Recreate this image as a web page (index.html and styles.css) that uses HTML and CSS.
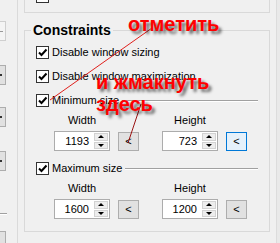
FILE: index.html
```html
<!DOCTYPE html>
<html lang="ru">
<head>
    <meta charset="UTF-8" />
    <meta name="viewport" content="width=device-width, initial-scale=1.0" />
    <title>Constraints</title>
    <link rel="stylesheet" href="styles.css">
</head>
<body>
    <div class="window">
        <div class="side">
            <div class="side-btn side-btn-first"><span class="dot"></span></div>
            <div class="side-btn side-btn-2"><span class="dot"></span></div>
            <div class="side-btn side-btn-3"><span class="dot"></span></div>
            <div class="side-btn side-btn-4"><span class="dot"></span></div>
            <div class="side-sep"></div>
            <div class="side-btn side-btn-5"></div>
        </div>

        <div class="main">
            <div class="group-stub">
                <div class="stub-check"></div>
            </div>

            <fieldset class="group">
                <legend>Constraints</legend>

                <label class="check-row">
                    <span class="check"><svg viewBox="0 0 11 11"><path d="M2 5.5 L4.5 8 L9.5 2.5"/></svg></span>
                    <span>Disable window sizing</span>
                </label>
                <label class="check-row">
                    <span class="check"><svg viewBox="0 0 11 11"><path d="M2 5.5 L4.5 8 L9.5 2.5"/></svg></span>
                    <span>Disable window maximization</span>
                </label>

                <div class="size-block">
                    <div class="check-row">
                        <span class="check"><svg viewBox="0 0 11 11"><path d="M2 5.5 L4.5 8 L9.5 2.5"/></svg></span>
                        <span>Minimum size</span>
                        <span class="rule"></span>
                    </div>
                    <div class="size-cols">
                        <div class="size-col">
                            <div class="size-label">Width</div>
                            <div class="size-row">
                                <div class="spin"><span class="spin-value">1193</span><span class="arrows"><span class="arrow up"></span><span class="arrow down"></span></span></div>
                                <button class="pick">&lt;</button>
                            </div>
                        </div>
                        <div class="size-col">
                            <div class="size-label">Height</div>
                            <div class="size-row">
                                <div class="spin"><span class="spin-value">723</span><span class="arrows"><span class="arrow up"></span><span class="arrow down"></span></span></div>
                                <button class="pick pick-focus">&lt;</button>
                            </div>
                        </div>
                    </div>
                </div>

                <div class="size-block size-block-max">
                    <div class="check-row">
                        <span class="check"><svg viewBox="0 0 11 11"><path d="M2 5.5 L4.5 8 L9.5 2.5"/></svg></span>
                        <span>Maximum size</span>
                        <span class="rule"></span>
                    </div>
                    <div class="size-cols">
                        <div class="size-col">
                            <div class="size-label">Width</div>
                            <div class="size-row">
                                <div class="spin"><span class="spin-value">1600</span><span class="arrows"><span class="arrow up"></span><span class="arrow down"></span></span></div>
                                <button class="pick">&lt;</button>
                            </div>
                        </div>
                        <div class="size-col">
                            <div class="size-label">Height</div>
                            <div class="size-row">
                                <div class="spin"><span class="spin-value">1200</span><span class="arrows"><span class="arrow up"></span><span class="arrow down"></span></span></div>
                                <button class="pick">&lt;</button>
                            </div>
                        </div>
                    </div>
                </div>
            </fieldset>
        </div>

        <div class="strip"></div>
    </div>

    <!-- пометки поверх скриншота -->
    <svg class="arrows-layer" width="280" height="243" viewBox="0 0 280 243">
        <line x1="152" y1="28" x2="50" y2="100" class="line-red"/>
        <line x1="141" y1="104" x2="128" y2="143" class="line-dark"/>
    </svg>
    <div class="note note-top">отметить</div>
    <div class="note note-mid">и жмакнуть<br>здесь</div>
</body>
</html>
```

FILE: styles.css
```css
* {
    margin: 0;
    padding: 0;
    box-sizing: border-box;
}

body {
    width: 280px;
    height: 243px;
    overflow: hidden;
    position: relative;
    background-color: #f0f0f0;
    font-family: 'Liberation Sans', Arial, sans-serif;
    font-size: 11px;
    color: #000;
}

.window {
    display: flex;
    height: 243px;
}

/* левая колонка с обрезанными кнопками */
.side {
    width: 18px;
    border-right: 1px solid #dadada;
    padding-top: 21px;
}

.side-btn {
    width: 6px;
    height: 20px;
    background-color: #e1e1e1;
    border: 1px solid #adadad;
    border-left: none;
    display: flex;
    align-items: center;
}

.side-btn-first {
    background-color: #f4f4f4;
    border-color: #cfcfcf;
}

.side-btn-2 { margin-top: 24px; }
.side-btn-3 { margin-top: 22px; }
.side-btn-4 { margin-top: 24px; }
.side-btn-5 { margin-top: 16px; height: 14px; border-bottom: none; }

.dot {
    width: 2px;
    height: 2px;
    background-color: #333;
}

.side-btn-first .dot {
    width: 3px;
    height: 1px;
    background-color: #999;
}

.side-sep {
    width: 7px;
    height: 2px;
    margin-top: 42px;
    border-top: 1px solid #a0a0a0;
    border-bottom: 1px solid #fff;
}

.main {
    width: 246px;
    margin-left: 6px;
}

.group-stub {
    height: 13px;
    border: 1px solid #d9d9d9;
    border-top: none;
}

.stub-check {
    width: 13px;
    height: 3px;
    margin-left: 11px;
    background-color: #fff;
    border: 1px solid #333;
    border-top: none;
}

.group {
    margin-top: 9px;
    border: 1px solid #d9d9d9;
    padding: 0 11px 12px 11px;
}

.group legend {
    font-size: 14px;
    font-weight: bold;
    line-height: 16px;
    margin-left: -5px;
    padding: 0 2px;
}

.check-row {
    display: flex;
    align-items: center;
    height: 13px;
    margin-top: 11px;
    line-height: 13px;
    white-space: nowrap;
}

.group > .check-row:first-of-type {
    margin-top: 8px;
}

.check {
    width: 13px;
    height: 13px;
    flex-shrink: 0;
    background-color: #fff;
    border: 1px solid #333;
    margin-right: 3px;
}

.check svg {
    display: block;
    width: 11px;
    height: 11px;
}

.check path {
    fill: none;
    stroke: #000;
    stroke-width: 2;
}

.rule {
    flex: 1;
    height: 2px;
    margin-left: 3px;
    border-top: 1px solid #a0a0a0;
    border-bottom: 1px solid #fff;
}

.size-block-max {
    margin-top: 5px;
}

.size-cols {
    display: flex;
    gap: 23px;
    margin-left: 18px;
}

.size-label {
    width: 56px;
    margin-top: 7px;
    text-align: center;
    line-height: 13px;
}

.size-row {
    display: flex;
    align-items: center;
    gap: 8px;
    margin-top: 4px;
}

.spin {
    width: 56px;
    height: 20px;
    display: flex;
    background-color: #fff;
    border: 1px solid #acacac;
}

.spin-value {
    flex: 1;
    text-align: right;
    padding-right: 5px;
    line-height: 18px;
}

.arrows {
    width: 15px;
    display: flex;
    flex-direction: column;
    padding: 1px 1px 1px 0;
    gap: 1px;
}

.arrow {
    flex: 1;
    background-color: #ededed;
    border: 1px solid #d2d2d2;
    display: flex;
    justify-content: center;
    align-items: center;
}

.arrow::before {
    content: "";
    border-left: 3px solid transparent;
    border-right: 3px solid transparent;
}

.arrow.up::before {
    border-bottom: 3px solid #000;
}

.arrow.down::before {
    border-top: 3px solid #000;
}

.pick {
    width: 21px;
    height: 19px;
    font-family: inherit;
    font-size: 11px;
    color: #000;
    background-color: #e1e1e1;
    border: 1px solid #adadad;
}

.pick-focus {
    background-color: #e5f1fb;
    border-color: #0078d7;
}

.strip {
    width: 4px;
    margin-left: auto;
    background-color: #e9e9e9;
    border-left: 1px solid #dcdcdc;
}

.arrows-layer {
    position: absolute;
    top: 0;
    left: 0;
    pointer-events: none;
}

.line-red {
    stroke: #e0201c;
    stroke-width: 1;
}

.line-dark {
    stroke: #9a1414;
    stroke-width: 1;
}

.note {
    position: absolute;
    font-size: 20px;
    font-weight: bold;
    line-height: 22px;
    color: #ff0000;
    white-space: nowrap;
    text-shadow: 3px 3px 3px rgba(0, 0, 0, 0.55);
}

.note-top {
    left: 128px;
    top: 13px;
}

.note-mid {
    left: 96px;
    top: 71px;
}
```
